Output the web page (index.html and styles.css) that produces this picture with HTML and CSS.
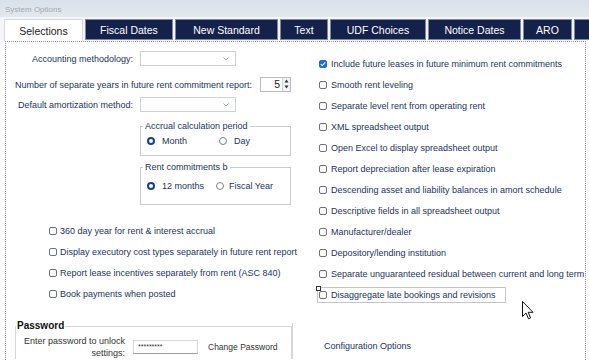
FILE: index.html
```html
<!DOCTYPE html>
<html lang="en">
<head>
    <meta charset="UTF-8">
    <title>System Options</title>
    <link rel="stylesheet" href="styles.css">
</head>
<body>
    <div class="titlebar">System Options</div>
    <div class="tabs">
        <div class="tab active w-sel">Selections</div>
        <div class="tab w-fis">Fiscal Dates</div>
        <div class="tab w-new">New Standard</div>
        <div class="tab w-txt">Text</div>
        <div class="tab w-udf">UDF Choices</div>
        <div class="tab w-not">Notice Dates</div>
        <div class="tab w-aro">ARO</div>
        <div class="tab w-more"></div>
    </div>
    <div class="panel">
        <div class="columns">
            <div class="left">
                <div class="field field-a">
                    <span class="lbl">Accounting methodology:</span>
                    <div class="select"><svg width="6" height="4" viewBox="0 0 6 4"><path d="M0.5 0.5 L3 3 L5.5 0.5" fill="none" stroke="#9a9ea6" stroke-width="1"/></svg></div>
                </div>
                <div class="field field-b">
                    <span class="lbl">Number of separate years in future rent commitment report:</span>
                    <div class="spin">
                        <span class="val">5</span>
                        <span class="arrows">
                            <svg width="7" height="6" viewBox="0 0 7 6"><path d="M1.5 4.5 L3.5 1.5 L5.5 4.5 Z" fill="#333"/></svg>
                            <svg width="7" height="6" viewBox="0 0 7 6"><path d="M1.5 1.5 L3.5 4.5 L5.5 1.5 Z" fill="#333"/></svg>
                        </span>
                    </div>
                </div>
                <div class="field field-a field-c">
                    <span class="lbl">Default amortization method:</span>
                    <div class="select"><svg width="6" height="4" viewBox="0 0 6 4"><path d="M0.5 0.5 L3 3 L5.5 0.5" fill="none" stroke="#9a9ea6" stroke-width="1"/></svg></div>
                </div>
                <fieldset class="group g1">
                    <legend>Accrual calculation period</legend>
                    <div class="radios">
                        <span class="radio on"><i class="dot"></i>Month</span>
                        <span class="radio"><i class="dot"></i>Day</span>
                    </div>
                </fieldset>
                <fieldset class="group g2">
                    <legend>Rent commitments b</legend>
                    <div class="radios">
                        <span class="radio on"><i class="dot"></i>12 months</span>
                        <span class="radio"><i class="dot"></i>Fiscal Year</span>
                    </div>
                </fieldset>
                <div class="checks">
                    <div class="row"><span class="item"><i class="cb"></i>360 day year for rent &amp; interest accrual</span></div>
                    <div class="row"><span class="item"><i class="cb"></i>Display executory cost types separately in future rent report</span></div>
                    <div class="row"><span class="item"><i class="cb"></i>Report lease incentives separately from rent (ASC 840)</span></div>
                    <div class="row"><span class="item"><i class="cb"></i>Book payments when posted</span></div>
                </div>
            </div>
            <div class="right">
                <div class="row"><span class="item"><i class="cb on"><svg width="8" height="8" viewBox="0 0 8 8"><path d="M1.8 4.2 L3.3 5.6 L6.2 2.4" fill="none" stroke="#fff" stroke-width="1.1"/></svg></i>Include future leases in future minimum rent commitments</span></div>
                <div class="row"><span class="item"><i class="cb"></i>Smooth rent leveling</span></div>
                <div class="row"><span class="item"><i class="cb"></i>Separate level rent from operating rent</span></div>
                <div class="row"><span class="item"><i class="cb"></i>XML spreadsheet output</span></div>
                <div class="row"><span class="item"><i class="cb"></i>Open Excel to display spreadsheet output</span></div>
                <div class="row"><span class="item"><i class="cb"></i>Report depreciation after lease expiration</span></div>
                <div class="row"><span class="item"><i class="cb"></i>Descending asset and liability balances in amort schedule</span></div>
                <div class="row"><span class="item"><i class="cb"></i>Descriptive fields in all spreadsheet output</span></div>
                <div class="row"><span class="item"><i class="cb"></i>Manufacturer/dealer</span></div>
                <div class="row"><span class="item"><i class="cb"></i>Depository/lending institution</span></div>
                <div class="row"><span class="item"><i class="cb"></i>Separate unguaranteed residual between current and long term</span></div>
                <div class="row"><span class="item focus"><i class="cb"></i>Disaggregate late bookings and revisions</span></div>
            </div>
        </div>
        <div class="bottom">
            <fieldset class="pw">
                <legend>Password</legend>
                <div class="pw-row">
                    <span class="pw-lbl">Enter password to unlock<br>settings:</span>
                    <div class="pw-input">*********</div>
                    <span class="change">Change Password</span>
                </div>
            </fieldset>
            <div class="config">Configuration Options</div>
        </div>
    </div>
    <svg class="cursor" width="12" height="19" viewBox="0 0 12 19"><path d="M0.5 0.5 L0.5 15.5 L4 12 L6.5 17.8 L8.6 16.9 L6.2 11.3 L11 11.3 Z" fill="#fff" stroke="#111" stroke-width="1" stroke-linejoin="round"/></svg>
</body>
</html>
```
FILE: styles.css
```css
* {
    box-sizing: border-box;
}
body {
    margin: 0;
    width: 589px;
    height: 360px;
    overflow: hidden;
    position: relative;
    background: #fff;
    font-family: "Liberation Sans", Arial, sans-serif;
    font-size: 9px;
    color: #25335a;
}
.titlebar {
    height: 17px;
    padding-left: 5px;
    line-height: 19px;
    font-size: 8px;
    color: #a3a9b2;
    background: linear-gradient(#d9e0e9, #e4e9ef);
}
.tabs {
    display: flex;
    align-items: flex-start;
    gap: 2px;
    height: 24px;
    padding: 2px 0 0 4px;
    background: #f3f5f8;
}
.tab {
    flex: none;
    height: 21px;
    display: flex;
    justify-content: center;
    align-items: center;
    background: #14214b;
    color: #fff;
    font-size: 10.5px;
    border: 1px solid #7f889c;
}
.tab.active {
    height: 22px;
    background: #fff;
    color: #222;
    border-color: #d6d9de;
    border-bottom: none;
}
.w-sel { width: 79px; }
.w-fis { width: 88px; }
.w-new { width: 103px; }
.w-txt { width: 48px; }
.w-udf { width: 96px; }
.w-not { width: 93px; }
.w-aro { width: 49px; }
.w-more { width: 30px; }
.panel {
    margin-left: 5px;
    width: 581px;
    height: 319px;
    border: 1px dotted #8d8d8d;
    border-bottom: none;
}
.columns {
    display: grid;
    grid-template-columns: 307px 1fr;
}
.left {
    padding-top: 9px;
}
.field {
    display: flex;
    align-items: center;
    height: 15px;
    white-space: nowrap;
}
.field-a .lbl {
    width: 127px;
    margin-right: 7px;
    text-align: right;
}
.field-b {
    margin-top: 11px;
    padding-left: 9px;
}
.field-b .lbl {
    width: 235px;
    margin-right: 10px;
    text-align: right;
}
.field-c {
    margin-top: 5px;
}
.select {
    width: 96px;
    height: 15px;
    display: flex;
    justify-content: flex-end;
    align-items: center;
    padding-right: 6px;
    border: 1px solid #cfd2d7;
    background: #fff;
}
.spin {
    width: 31px;
    height: 15px;
    display: flex;
    border: 1px solid #b7bbc2;
}
.spin .val {
    flex: 1;
    text-align: right;
    padding-right: 2px;
    line-height: 13px;
    font-size: 10.5px;
    color: #222;
}
.spin .arrows {
    width: 8px;
    display: flex;
    flex-direction: column;
    border-left: 1px solid #d2d4d8;
    background: #f2f3f5;
}
.group {
    width: 151px;
    margin: 8.5px 0 0 134px;
    padding: 3px 0 8px 0;
    border: 1px solid #c9cdd3;
    min-width: 0;
}
.group legend {
    margin-left: 2px;
    padding: 0 2px;
    font-size: 9px;
    line-height: 11px;
}
.g2 {
    margin-top: 6.5px;
    padding: 7px 0 12px 0;
}
.radios {
    display: flex;
    align-items: center;
    height: 12px;
    padding-left: 6px;
}
.radio {
    display: flex;
    align-items: center;
    gap: 7px;
    white-space: nowrap;
}
.radio:first-child {
    width: 72px;
}
.g2 .radio:first-child {
    width: 69px;
}
.g2 .radio:last-child {
    gap: 5px;
}
.dot {
    width: 8px;
    height: 8px;
    border-radius: 50%;
    border: 1px solid #7b7f87;
    background: #fff;
}
.radio.on .dot {
    border: 2.5px solid #1b3d93;
}
.checks {
    margin-top: 15.5px;
    padding-left: 43px;
}
.right {
    padding: 11px 0 0 6px;
}
.row {
    height: 21px;
    display: flex;
    align-items: center;
    white-space: nowrap;
}
.item {
    display: inline-flex;
    align-items: center;
    gap: 4px;
}
.checks .item {
    gap: 3px;
}
.cb {
    width: 8px;
    height: 8px;
    border: 1px solid #6d7179;
    border-radius: 2px;
    background: #fff;
    display: flex;
}
.cb.on {
    border-color: #1f6dd0;
    background: #1f6dd0;
}
.cb.on svg {
    margin: -1px;
}
.item.focus {
    position: relative;
    height: 16px;
    margin-left: -2px;
    padding: 0 9px 0 1px;
    border: 1px solid #c3c6cb;
}
.item.focus::before {
    content: "";
    position: absolute;
    left: -2px;
    top: -2px;
    width: 3px;
    height: 3px;
    border: 1px solid #333;
    background: #fff;
}
.bottom {
    display: grid;
    grid-template-columns: 277px 1fr;
    margin-top: 15px;
    padding-left: 9px;
}
.pw {
    margin: 0;
    padding: 2.5px 0 0 0;
    border: 1px solid #d3d6da;
    border-bottom: none;
    min-width: 0;
}
.pw legend {
    padding: 0 1px;
    font-size: 10px;
    line-height: 12px;
    font-weight: bold;
    color: #111;
}
.pw-row {
    display: flex;
    align-items: center;
    color: #333;
}
.pw-lbl {
    width: 109px;
    margin-right: 8px;
    text-align: right;
    line-height: 12px;
}
.pw-input {
    width: 65px;
    height: 14px;
    padding: 2px 0 0 4px;
    border: 1px solid #d4d6da;
    border-bottom-color: #9a9ea5;
    font-size: 7px;
    line-height: 8px;
    color: #333;
}
.change {
    margin-left: 10px;
    font-size: 8.5px;
}
.config {
    margin-top: 3px;
    padding: 18px 0 0 31px;
    border-left: 1px solid #d3d6da;
}
.cursor {
    position: absolute;
    left: 522px;
    top: 301px;
}
```
